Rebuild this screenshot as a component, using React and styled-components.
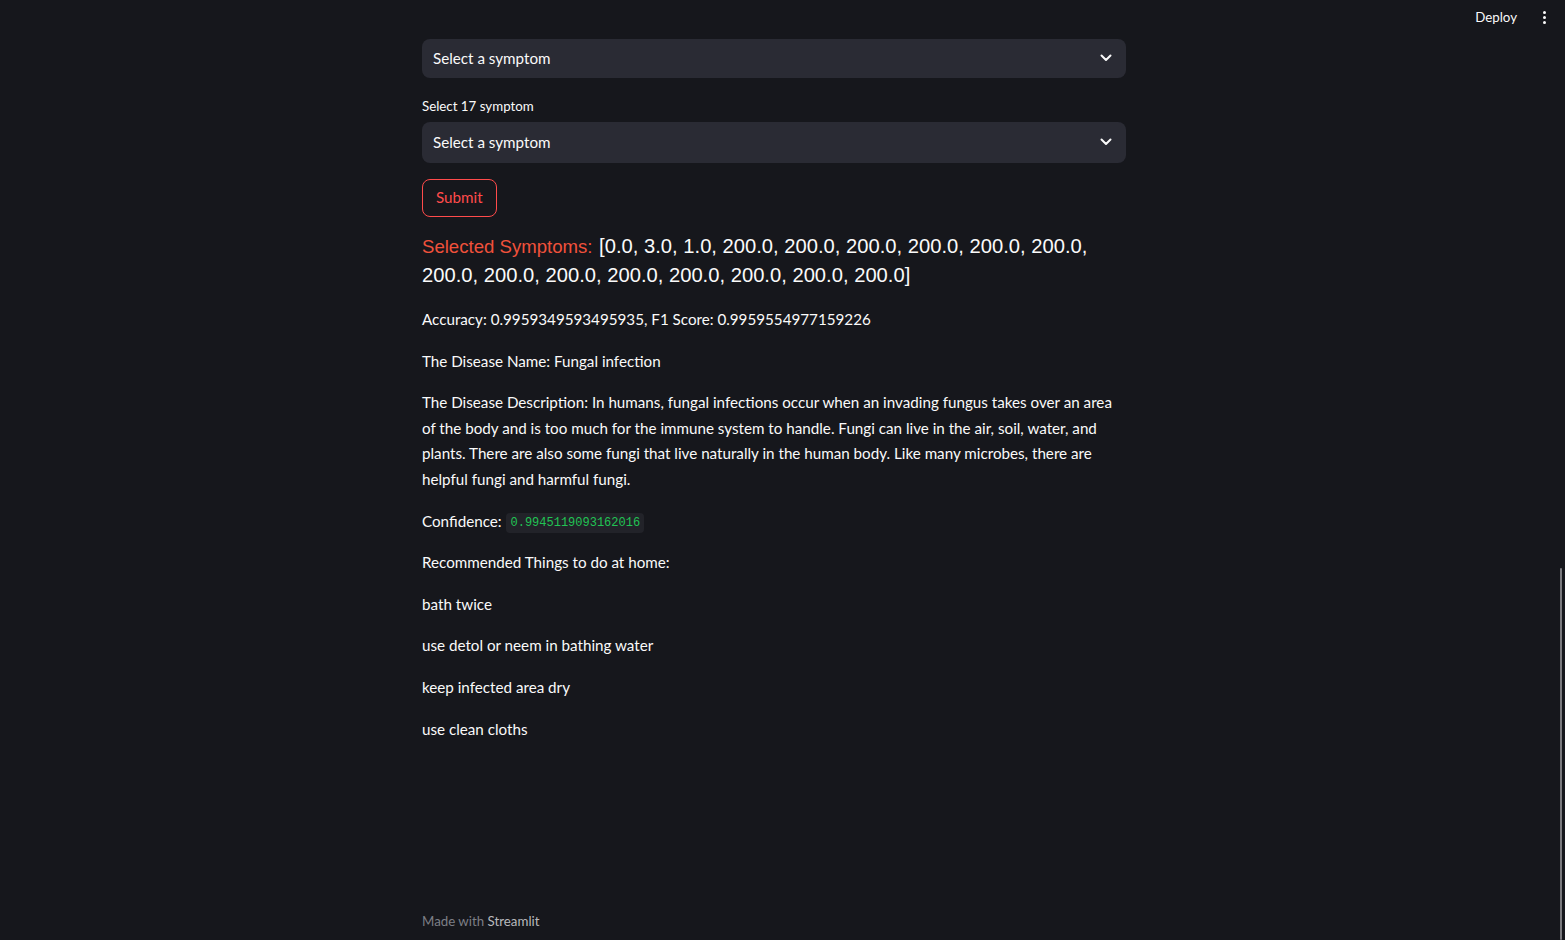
import styled, { createGlobalStyle } from "styled-components";

const GlobalStyle = createGlobalStyle`
  html, body {
    margin: 0;
    padding: 0;
    background: #16171c;
    color: #fafafa;
    font-family: Lato, "Noto Sans", sans-serif;
    overflow: hidden;
  }
`;

const Page = styled.div`
  position: relative;
  width: 100vw;
  height: 940px;
  background: #16171c;
`;

const Header = styled.div`
  position: absolute;
  top: 0;
  right: 0;
  height: 34px;
  display: flex;
  align-items: center;
  gap: 26px;
  padding-right: 19px;
`;

const Deploy = styled.span`
  font-size: 13.3px;
  color: #fafafa;
`;

const Kebab = styled.span`
  display: flex;
  flex-direction: column;
  gap: 2px;
  span {
    width: 3px;
    height: 3px;
    border-radius: 50%;
    background: #fafafa;
  }
`;

const Main = styled.div`
  width: calc(100% - 17px);
  display: flex;
  justify-content: center;
  padding-top: 39px;
`;

const Column = styled.div`
  width: 704px;
  display: flex;
  flex-direction: column;
  height: 901px;
  font-size: 15.2px;
`;

const Select = styled.div`
  height: ${(p) => p.$h || 40}px;
  background: #2a2b34;
  border-radius: 8px;
  display: flex;
  align-items: center;
  justify-content: space-between;
  padding: 0 14px 2px 11px;
  font-size: 15.2px;
  color: #fafafa;
  box-sizing: border-box;
`;

const Label = styled.div`
  font-size: 13.3px;
  margin: 20px 0 8px;
`;

const Button = styled.button`
  align-self: flex-start;
  margin-top: 16px;
  height: 38px;
  padding: 0 13px 2px;
  background: transparent;
  border: 1px solid #ff4b4b;
  border-radius: 8px;
  color: #ff4b4b;
  font-family: inherit;
  font-size: 15.2px;
`;

const Symptoms = styled.div`
  margin-top: 15px;
  font-family: "Liberation Sans", Arial, sans-serif;
  font-size: 20.2px;
  line-height: 29px;
  color: #fafafa;
`;

const Accent = styled.span`
  color: #f0513b;
  font-size: 18.6px;
  margin-right: 1px;
`;

const Para = styled.p`
  margin: 0;
  margin-top: ${(p) => p.$top || 16}px;
  line-height: 25.6px;
`;

const Code = styled.code`
  font-family: "Liberation Mono", monospace;
  font-size: 12px;
  line-height: 1;
  vertical-align: 1px;
  color: #21c354;
  background: #222329;
  border-radius: 4px;
  padding: 3px 4px;
  margin-left: 1px;
`;

const Footer = styled.div`
  margin-top: auto;
  padding-bottom: 11px;
  font-size: 13.3px;
  color: #7d7f86;
  b {
    font-weight: normal;
    color: #b8b9bd;
  }
`;

const Scroll = styled.div`
  position: absolute;
  right: 3px;
  top: 568px;
  width: 2px;
  height: 372px;
  background: #7a7a7e;
  border-radius: 1px;
`;

const Chevron = () => (
  <svg width="12" height="8" viewBox="0 0 12 8" fill="none">
    <path d="M1.5 1.5 L6 6 L10.5 1.5" stroke="#fafafa" strokeWidth="2" strokeLinecap="round" strokeLinejoin="round" />
  </svg>
);

const tips = ["bath twice", "use detol or neem in bathing water", "keep infected area dry", "use clean cloths"];

export default function App() {
  return (
    <Page>
      <GlobalStyle />
      <Header>
        <Deploy>Deploy</Deploy>
        <Kebab><span /><span /><span /></Kebab>
      </Header>
      <Main>
        <Column>
          <Select $h={39}>Select a symptom<Chevron /></Select>
          <Label>Select 17 symptom</Label>
          <Select $h={41}>Select a symptom<Chevron /></Select>
          <Button>Submit</Button>
          <Symptoms>
            <Accent>Selected Symptoms:</Accent> [0.0, 3.0, 1.0, 200.0, 200.0, 200.0, 200.0, 200.0, 200.0, 200.0, 200.0, 200.0, 200.0, 200.0, 200.0, 200.0, 200.0]
          </Symptoms>
          <Para $top={17}>Accuracy: 0.9959349593495935, F1 Score: 0.9959554977159226</Para>
          <Para>The Disease Name: Fungal infection</Para>
          <Para>
            The Disease Description: In humans, fungal infections occur when an invading fungus takes over an area of the body and is too much for the immune system to handle. Fungi can live in the air, soil, water, and plants. There are also some fungi that live naturally in the human body. Like many microbes, there are helpful fungi and harmful fungi.
          </Para>
          <Para>Confidence: <Code>0.9945119093162016</Code></Para>
          <Para>Recommended Things to do at home:</Para>
          {tips.map((t) => (
            <Para key={t}>{t}</Para>
          ))}
          <Footer>Made with <b>Streamlit</b></Footer>
        </Column>
      </Main>
      <Scroll />
    </Page>
  );
}
